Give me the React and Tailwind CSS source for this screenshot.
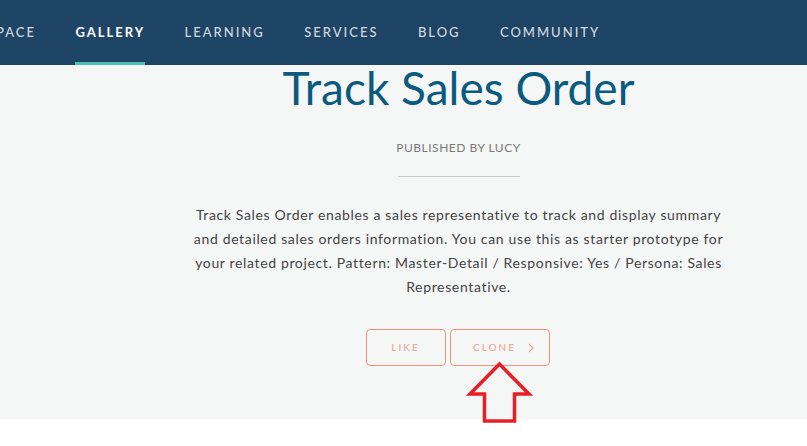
const navItems = ['PACE', 'GALLERY', 'LEARNING', 'SERVICES', 'BLOG', 'COMMUNITY']

const App = () => {
  return (
    <div className="relative w-[807px] h-[446px] overflow-hidden bg-white font-['Lato','Noto_Sans',sans-serif]">
      {/* Top nav */}
      <nav className="h-[65px] bg-[#1e4466] flex items-stretch gap-[39.4px] ml-[-4px]">
        {navItems.map((item) => (
          <div
            key={item}
            className={
              item === 'GALLERY'
                ? 'relative flex items-center text-[13px] font-bold tracking-[2px] text-white'
                : 'relative flex items-center text-[13px] font-medium tracking-[2px] text-[#d4d8dc]'
            }
          >
            {item}
            {item === 'GALLERY' && (
              <span className="absolute left-0 right-0 bottom-0 h-[3px] bg-[#4fc1b4]" />
            )}
          </div>
        ))}
      </nav>

      {/* Content */}
      <main className="h-[354px] bg-[#f5f6f6] pl-[110px] flex flex-col items-center">
        <h1 className="text-[46px] leading-none text-[#0b5a80]">Track Sales Order</h1>
        <div className="mt-[31px] text-[12px] leading-[12px] tracking-[0.5px] text-[#7a7a7a]">
          PUBLISHED BY LUCY
        </div>
        <div className="mt-[22px] w-[122px] h-px bg-[#c8c8c8]" />
        <p className="mt-[26px] w-[545px] text-center text-[14px] leading-[24px] tracking-[0.65px] text-[#444]">
          Track Sales Order enables a sales representative to track and display summary and detailed
          sales orders information. You can use this as starter prototype for your related project.
          Pattern: Master-Detail / Responsive: Yes / Persona: Sales Representative.
        </p>
        <div className="mt-[30px] flex gap-[4px] ml-[-2px]">
          <button className="w-[80px] h-[37px] border border-[#f0907c] rounded-[4px] text-[10px] tracking-[2px] text-[#f0a08c]">
            LIKE
          </button>
          <button className="w-[100px] h-[37px] border border-[#f0907c] rounded-[4px] flex items-center justify-center gap-[12px] pl-[8px] text-[10px] tracking-[2px] text-[#f0a08c]">
            CLONE
            <svg width="6" height="10" viewBox="0 0 6 10" fill="none">
              <path d="M1 1l4 4-4 4" stroke="#f0a08c" strokeWidth="1.2" />
            </svg>
          </button>
        </div>
      </main>

      {/* Red arrow annotation */}
      <svg
        className="absolute left-0 top-0 pointer-events-none"
        width="807"
        height="446"
        viewBox="0 0 807 446"
      >
        <polygon
          points="499.5,364 470,394 484.5,394 484.5,421 514.5,421 514.5,394 529,394"
          fill="none"
          stroke="#e81e25"
          strokeWidth="3.5"
          strokeLinejoin="miter"
        />
      </svg>
    </div>
  )
}

export default App
